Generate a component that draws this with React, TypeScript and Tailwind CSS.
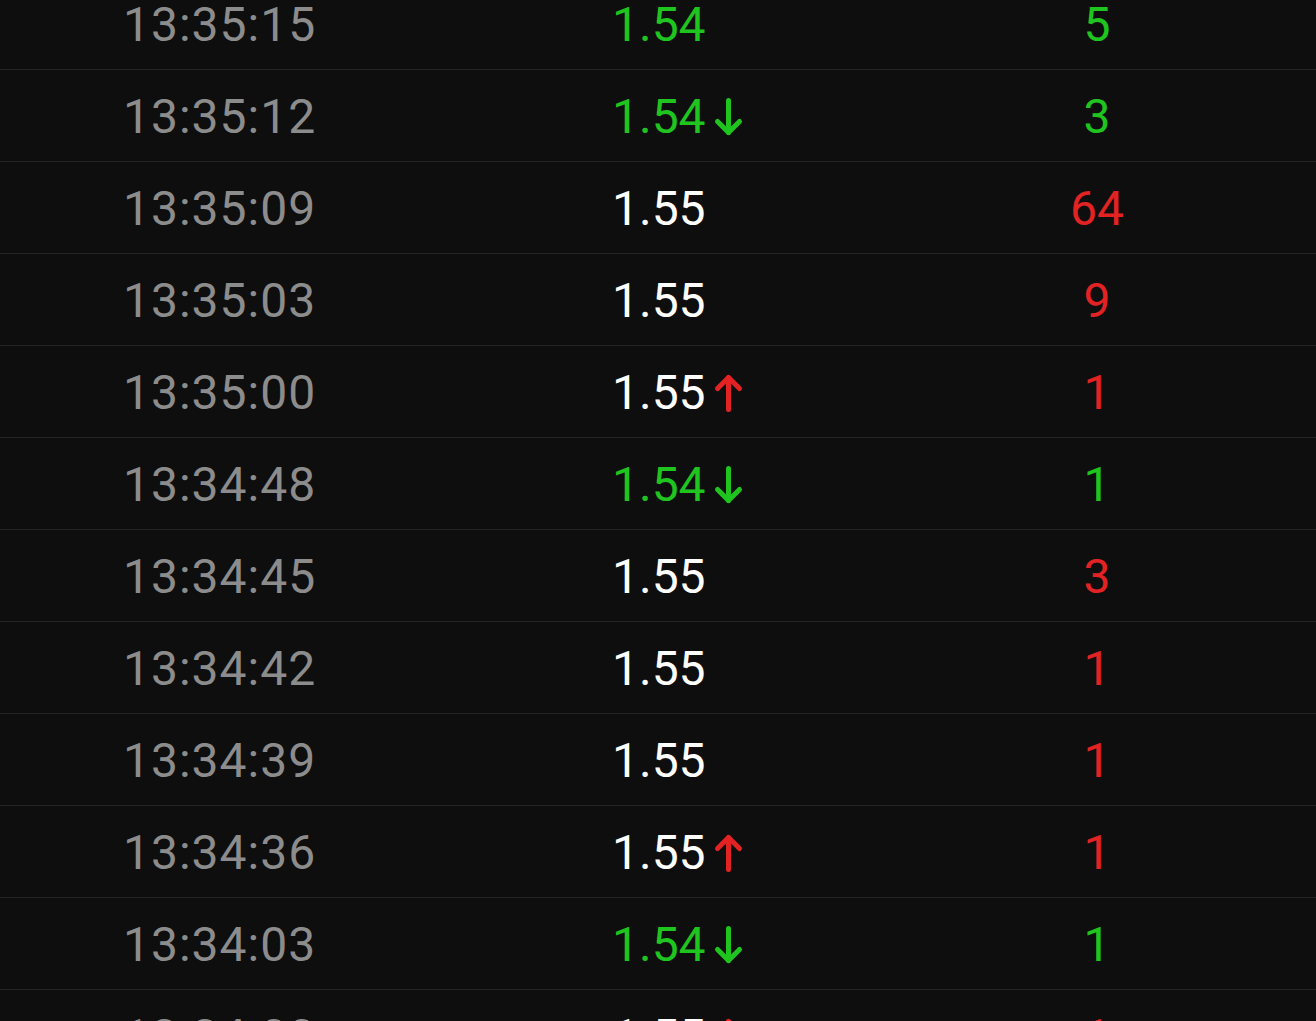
import React from "react";

type Row = { t: string; p: string; pc: "g" | "w"; arrow?: "up" | "down"; v: string; vc: "g" | "r" };

const rows: Row[] = [
  { t: "13:35:15", p: "1.54", pc: "g", v: "5", vc: "g" },
  { t: "13:35:12", p: "1.54", pc: "g", arrow: "down", v: "3", vc: "g" },
  { t: "13:35:09", p: "1.55", pc: "w", v: "64", vc: "r" },
  { t: "13:35:03", p: "1.55", pc: "w", v: "9", vc: "r" },
  { t: "13:35:00", p: "1.55", pc: "w", arrow: "up", v: "1", vc: "r" },
  { t: "13:34:48", p: "1.54", pc: "g", arrow: "down", v: "1", vc: "g" },
  { t: "13:34:45", p: "1.55", pc: "w", v: "3", vc: "r" },
  { t: "13:34:42", p: "1.55", pc: "w", v: "1", vc: "r" },
  { t: "13:34:39", p: "1.55", pc: "w", v: "1", vc: "r" },
  { t: "13:34:36", p: "1.55", pc: "w", arrow: "up", v: "1", vc: "r" },
  { t: "13:34:03", p: "1.54", pc: "g", arrow: "down", v: "1", vc: "g" },
  { t: "13:34:00", p: "1.55", pc: "w", arrow: "up", v: "1", vc: "r" },
];

function Arrow({ dir }: { dir: "up" | "down" }) {
  const color = dir === "up" ? "#e32323" : "#1fc41f";
  return (
    <svg width="31" height="40" viewBox="0 0 31 40" className="ml-[7px]" fill="none" stroke={color} strokeWidth="5" strokeLinecap="round" strokeLinejoin="round">
      {dir === "down" ? (
        <>
          <path d="M15.5 3.5 V35.5" />
          <path d="M4.5 24.5 L15.5 35.5 L26.5 24.5" />
        </>
      ) : (
        <>
          <path d="M15.5 36.5 V4.5" />
          <path d="M4.5 15.5 L15.5 4.5 L26.5 15.5" />
        </>
      )}
    </svg>
  );
}

export default function App() {
  return (
    <div className="w-[1316px] h-[1021px] overflow-hidden bg-[#0e0e0e]" style={{ fontFamily: "Roboto, 'Noto Sans', sans-serif" }}>
      <div className="-mt-[22px]">
        {rows.map((r, i) => (
          <div key={i} className="flex items-center h-[92px] border-b border-[#242424] text-[48px] leading-none">
            <div className="w-[612px] pl-[123px] pt-[2px] text-[#8c8c8c] tracking-[1px]">{r.t}</div>
            <div className={`w-[300px] flex items-center pt-[2px] ${r.pc === "g" ? "text-[#1fc41f]" : "text-white"}`}>
              <span>{r.p}</span>
              {r.arrow && <Arrow dir={r.arrow} />}
            </div>
            <div className={`w-[370px] pt-[2px] text-center ${r.vc === "g" ? "text-[#1fc41f]" : "text-[#e32323]"}`}>{r.v}</div>
          </div>
        ))}
      </div>
    </div>
  );
}
